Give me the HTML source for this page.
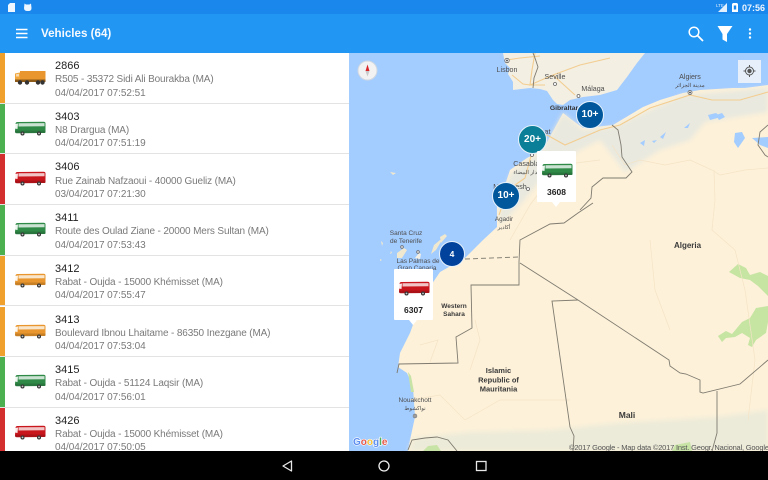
<!DOCTYPE html>
<html><head><meta charset="utf-8">
<style>
*{box-sizing:border-box}
html,body{margin:0;padding:0;width:768px;height:480px;overflow:hidden;background:#000;font-family:"Liberation Sans","Noto Sans CJK SC",sans-serif}
.abs{position:absolute}
#status{left:0;top:0;width:768px;height:14px;background:#1a87ec}
#bar{left:0;top:14px;width:768px;height:39px;background:#2196f3}
#title{left:41px;top:26px;color:#fff;font-size:11.6px;font-weight:bold;line-height:16px;opacity:.96}
#list{left:0;top:53px;width:349px;height:398px;background:#fff;overflow:hidden}
.row{position:absolute;left:0;width:349px;height:50.7px;border-bottom:1px solid #e3e3e3}
.c{position:absolute;left:0;top:0;width:5px;height:100%}
.n{position:absolute;left:55px;top:6px;font-size:11px;line-height:14px;color:#222}
.a{position:absolute;left:55px;top:20.200px;font-size:10px;letter-spacing:-.14px;line-height:14px;color:#7a7a7a;white-space:nowrap}
.d{position:absolute;left:55px;top:33.500px;font-size:10px;letter-spacing:-.06px;line-height:14px;color:#7a7a7a;white-space:nowrap}
.ic{position:absolute;left:14px;top:16px;width:32px;height:18px}
#nav{left:0;top:451px;width:768px;height:29px;background:#000}
.clu{position:absolute;border-radius:50%;border:1.5px solid #e8f2fb;color:#fff;font-weight:bold;text-align:center}
.card{position:absolute;background:#fff;width:39px;height:51px;border-radius:1px}
.card:after{content:"";position:absolute;left:15px;bottom:-5px;border-left:4px solid transparent;border-right:4px solid transparent;border-top:5px solid #fff}
.card b{position:absolute;left:0;width:100%;top:34.500px;text-align:center;font-size:8.5px;color:#222;line-height:12px}
.card svg{position:absolute;left:4px;top:11px;width:32px;height:18px}
</style></head><body>

<svg width="0" height="0" style="position:absolute">
<defs>
<filter id="soft"><feGaussianBlur stdDeviation="2.500"/></filter>
<symbol id="bus" viewBox="0 0 32 18">
<path d="M1.500 4Q1.500 2 3.500 2L29.500 1.800Q31.500 1.800 31.500 3.500L31.500 12Q31.500 13 30 13L3 13.300Q1 13.300 1 11.500Z" fill="currentColor"/>
<path d="M4.500 3.300L30.500 3.100L30.500 6.300L4.500 6.500Z" fill="#fff" opacity=".75"/>
<path d="M1 4L4 3.500L3.500 9L.5 8.500Z" fill="#fff" opacity=".9"/>
<path d="M1 10.500H31.500V13L1 13.300Z" fill="#000" opacity=".14"/>
<circle cx="8.500" cy="13.500" r="2" fill="#333"/><circle cx="8.500" cy="13.500" r=".9" fill="#ccc"/>
<circle cx="25" cy="13.500" r="2" fill="#333"/><circle cx="25" cy="13.500" r=".9" fill="#ccc"/>
</symbol>
<symbol id="truck" viewBox="0 0 32 18">
<rect x="6" y="2" width="25.500" height="9" fill="#e8962d"/>
<path d="M1 4.500L6 3.500V11.500H1Z" fill="#f0a63a"/>
<path d="M2 5.300L5 4.800V7.500H2Z" fill="#fff" opacity=".6"/>
<rect x="1" y="10.500" width="30.500" height="2.500" fill="#8d5a17"/>
<circle cx="6" cy="13.500" r="2.200" fill="#333"/><circle cx="13" cy="13.500" r="2.200" fill="#333"/><circle cx="24" cy="13.500" r="2.200" fill="#333"/><circle cx="28.500" cy="13.500" r="2.200" fill="#333"/>
</symbol>
</defs>
</svg>

<!-- MAP -->
<svg class="abs" style="left:349px;top:53px" width="419" height="398" viewBox="349 53 419 398">
<rect x="349" y="53" width="419" height="398" fill="#a3ccff"/>
<!-- Iberia -->
<path d="M503 53L505 63L510 68L508 74L513 82L513 90L530 88L540 89L547 91L553 100L557 104L563 105L570 100L583 97L600 95L617 90L627 77L637 63L645 53Z" fill="#f3efe3"/>
<!-- Africa -->
<path d="M563 113L552 133L543 150L527 158L510 170L505 185L497 197L497 227L483 240L465 258L440 272L423 297L410 333L400 353L398 367L407 373L413 387L415 417L410 440L408 451L768 451L768 85L745 88L733 88L700 90L683 93L660 100L643 107L628 116L613 125L595 127L583 128L572 120Z" fill="#fdf1d9"/>
<!-- Grey northern belt -->
<path d="M563 113L543 150L512 172L500 200L500 225L520 205L545 175L580 150L600 140L625 172L660 150L690 140L705 122L768 112L768 88L683 95L613 127L583 130Z" fill="#e9e9df" filter="url(#soft)"/>
<!-- Bottom sahel -->
<path d="M408 451L414 438L470 432L550 430L617 423L717 417L768 410L768 451Z" fill="#ecebd9" filter="url(#soft)"/>
<!-- Green patches -->
<path d="M729 272L738 264L746 268L750 275L760 272L768 276L768 296L758 286L750 280L740 278Z M718 336L726 331L732 334L742 322L750 318L756 308L768 306L768 322L766 333L756 340L752 347L748 345L750 338L742 333L735 337L726 338L722 342Z" fill="#c6e4a2"/>
<path d="M408 372L411 376L414 392L411 392Z M423 451L428 446L437 445L441 451Z M672 451L675 445L690 442L692 451Z" fill="#c8e3a6"/>
<!-- Islands -->
<path d="M381 241L383 243L382 246Z M391 251L392 253L390 254Z M380 259L382 260L380 261Z M397 253L404 248L407 250L402 258L397 258Z M440 237L445 234L447 236L441 243Z M434 245L440 240L442 240L436 250L431 254Z M390 172L396 173L393 175Z" fill="#f0e8cf"/>
<path d="M415 258L419 253L421 254L420 259Z" fill="#f3efe3"/>
<!-- Lakes -->
<path d="M640 143L645 140L644 146Z M652 141L657 140L654 143Z M660 137L666 132L663 139Z M684 128L690 123L688 128Z M716 115L722 113L725 117L719 120Z M735 133L742 132L745 138L738 148L734 142Z M752 138L768 137L768 148L760 145Z" fill="#a3ccff"/>
<path d="M708 115L716 113L721 117L710 120Z" fill="#a3ccff"/>
<!-- Roads -->
<g fill="none" stroke="#f3cd90" stroke-width="1.100">
<path d="M507 60L520 58L540 56M512 75L523 84L530 85L545 85M535 53L532 70L530 85L553 75L580 65L610 58M553 75L575 95"/>
<path d="M532 152L547 135L565 145L600 130L620 125L650 108L690 95L712 100L740 100L768 92"/>
<path d="M532 152L525 178L508 190L499 215"/>
</g>
<g fill="none" stroke="#f4e3c6" stroke-width=".7">
<path d="M612 145L625 165L640 160L665 165L690 160M690 160L712 170L720 175L745 170L768 168M714 170L715 200L712 230L735 250M600 160L560 165L530 205M530 205L510 240M650 240L655 290L670 330M735 250L745 290L755 360L748 420M420 345L438 340L430 362M410 400L440 395L465 420L500 400L570 400M475 320L480 340L470 370"/>
</g>
<!-- Borders -->
<g fill="none" stroke="#7f7b70" stroke-width=".9">
<path d="M612 125L618 130L621 145L622 157L632 172L626 178L603 178L592 187L591 198L580 210"/>
<path d="M593 203L578 213L564 223L550 224L520 240L519 262V285H471L472 328L456 337L458 363L399 364L397 373"/>
<path d="M520 263L578 300L669 360L670 366L680 373L686 374L700 380L700 392L703 393L740 384L768 360"/>
<path d="M578 300L552 301L570 427L574 436L573 451"/>
<path d="M717 391L717 433L712 451"/>
<path d="M768 125L760 132L758 145L765 155L768 157"/>
<path d="M408 450L412 440L425 438L437 437L448 440L457 451"/>
<path d="M533 53L535 58L538 67L534 78L533 88"/>
</g>
<path d="M465 259L519 257" stroke="#8a857a" stroke-width="1" stroke-dasharray="5 3" fill="none"/>
<!-- City markers -->
<g fill="#fff" stroke="#666" stroke-width=".8">
<circle cx="507" cy="60.500" r="2.200"/><circle cx="555" cy="84" r="1.500"/><circle cx="578.500" cy="96" r="1.500"/><circle cx="690" cy="92.500" r="2"/><circle cx="532" cy="155" r="1.500"/><circle cx="528" cy="189" r="1.500"/><circle cx="415" cy="416" r="1.800"/><circle cx="418" cy="252" r="1.300"/><circle cx="402" cy="247" r="1.300"/>
</g>
<circle cx="507" cy="60.500" r="1" fill="#555"/><circle cx="690" cy="92.500" r="1" fill="#555"/><circle cx="415" cy="416" r=".9" fill="#555"/>
<!-- Labels -->
<g font-family="Liberation Sans,Noto Sans CJK SC,sans-serif" font-size="7.100" fill="#4d4d4d" text-anchor="middle">
<text x="507" y="72">Lisbon</text>
<text x="555" y="79">Seville</text>
<text x="593" y="91">Málaga</text>
<text x="690" y="79">Algiers</text>
<text x="690" y="87" font-size="5.500">مدينة الجزائر</text>
<text x="541" y="134">Rabat</text>
<text x="532" y="166">Casablanca</text>
<text x="527" y="174" font-size="5.500">الدار البيضاء</text>
<text x="510" y="189">Marrakesh</text>
<text x="504" y="221" font-size="6.300">Agadir</text>
<text x="504" y="229" font-size="5.500">أكادير</text>
<text x="406" y="235" font-size="6.500">Santa Cruz</text>
<text x="406" y="243" font-size="6.500">de Tenerife</text>
<text x="418" y="263" font-size="6.500">Las Palmas de</text>
<text x="417" y="270" font-size="6.500">Gran Canaria</text>
<text x="415" y="402" font-size="6.500">Nouakchott</text>
<text x="415" y="410" font-size="5.500">نواكشوط</text>
</g>
<g font-family="Liberation Sans,sans-serif" font-size="8" font-weight="bold" fill="#3a3a3a" text-anchor="middle">
<text x="564" y="110" font-size="6.800" fill="#333">Gibraltar</text>
<text x="687.500" y="248">Algeria</text>
<text x="454" y="308" font-size="6.500">Western</text>
<text x="454" y="316" font-size="6.500">Sahara</text>
<text x="498.500" y="373" font-size="7.500">Islamic</text>
<text x="498.500" y="382.500" font-size="7.500">Republic of</text>
<text x="498.500" y="391.500" font-size="7.500">Mauritania</text>
<text x="627" y="418" font-size="8.500">Mali</text>
</g>
<!-- Google -->
<g font-family="Liberation Sans,sans-serif" font-size="10" font-weight="bold" stroke="#fff" stroke-width="1.200" paint-order="stroke">
<text x="353" y="445"><tspan fill="#5b8def">G</tspan><tspan fill="#e4584a">o</tspan><tspan fill="#f2c03a">o</tspan><tspan fill="#5b8def">g</tspan><tspan fill="#4fb060">l</tspan><tspan fill="#e4584a">e</tspan></text>
</g>
<text x="569" y="450" font-family="Liberation Sans,sans-serif" font-size="7.500" fill="#555" textLength="200">©2017 Google - Map data ©2017 Inst. Geogr. Nacional, Google</text>
<!-- Compass -->
<circle cx="367.500" cy="70.500" r="9.500" fill="#f2f2f2" stroke="#cfd8e2" stroke-width="1"/>
<path d="M367.500 64.500L365.500 71H369.500Z" fill="#d9262a"/>
<path d="M367.500 76.500L365.500 71H369.500Z" fill="#c8c8c8"/>
<!-- Locate -->
<rect x="738" y="60" width="23" height="23" fill="#e6effa"/>
<circle cx="749.500" cy="71" r="4" fill="none" stroke="#555" stroke-width="1"/>
<circle cx="749.500" cy="71" r="2.200" fill="#555"/>
<path d="M749.500 65V67M749.500 75V77M743.500 71H745.500M753.500 71H755.500" stroke="#555" stroke-width="1"/>
</svg>

<!-- Clusters -->
<div class="clu" style="left:576px;top:101px;width:28px;height:28px;background:#01579b;font-size:10px;line-height:26px">10+</div>
<div class="clu" style="left:518px;top:125px;width:29px;height:29px;background:#0b7f98;font-size:10px;line-height:27px">20+</div>
<div class="clu" style="left:492px;top:182px;width:28px;height:28px;background:#01579b;font-size:10px;line-height:26px">10+</div>
<div class="clu" style="left:439px;top:241px;width:26px;height:26px;background:#01439c;font-size:8.500px;line-height:24px">4</div>

<!-- Cards -->
<div class="card" style="left:537px;top:151px">
<svg style="color:#2f8a47"><use href="#bus"/></svg><b>3608</b></div>
<div class="card" style="left:394px;top:269px">
<svg style="color:#c8161c"><use href="#bus"/></svg><b>6307</b></div>

<!-- LIST -->
<div class="abs" id="list">
<div class="row" style="top:0"><div class="c" style="background:#f0a02c"></div><svg class="ic" style="color:#e8962d"><use href="#truck"/></svg><div class="n">2866</div><div class="a">R505 - 35372 Sidi Ali Bourakba (MA)</div><div class="d">04/04/2017 07:52:51</div></div>
<div class="row" style="top:50.700px"><div class="c" style="background:#4caf50"></div><svg class="ic" style="color:#2f8a47"><use href="#bus"/></svg><div class="n">3403</div><div class="a">N8 Drargua (MA)</div><div class="d">04/04/2017 07:51:19</div></div>
<div class="row" style="top:101.400px"><div class="c" style="background:#d32f2f"></div><svg class="ic" style="color:#c8161c"><use href="#bus"/></svg><div class="n">3406</div><div class="a">Rue Zainab Nafzaoui - 40000 Gueliz (MA)</div><div class="d">03/04/2017 07:21:30</div></div>
<div class="row" style="top:152.100px"><div class="c" style="background:#4caf50"></div><svg class="ic" style="color:#2f8a47"><use href="#bus"/></svg><div class="n">3411</div><div class="a">Route des Oulad Ziane - 20000 Mers Sultan (MA)</div><div class="d">04/04/2017 07:53:43</div></div>
<div class="row" style="top:202.800px"><div class="c" style="background:#f0a02c"></div><svg class="ic" style="color:#e8962d"><use href="#bus"/></svg><div class="n">3412</div><div class="a">Rabat - Oujda - 15000 Khémisset (MA)</div><div class="d">04/04/2017 07:55:47</div></div>
<div class="row" style="top:253.500px"><div class="c" style="background:#f0a02c"></div><svg class="ic" style="color:#e8962d"><use href="#bus"/></svg><div class="n">3413</div><div class="a">Boulevard Ibnou Lhaitame - 86350 Inezgane (MA)</div><div class="d">04/04/2017 07:53:04</div></div>
<div class="row" style="top:304.200px"><div class="c" style="background:#4caf50"></div><svg class="ic" style="color:#2f8a47"><use href="#bus"/></svg><div class="n">3415</div><div class="a">Rabat - Oujda - 51124 Laqsir (MA)</div><div class="d">04/04/2017 07:56:01</div></div>
<div class="row" style="top:354.900px"><div class="c" style="background:#d32f2f"></div><svg class="ic" style="color:#c8161c"><use href="#bus"/></svg><div class="n">3426</div><div class="a">Rabat - Oujda - 15000 Khémisset (MA)</div><div class="d">04/04/2017 07:50:05</div></div>
</div>

<!-- STATUS -->
<div class="abs" id="status"></div>
<svg class="abs" style="left:0;top:0" width="768" height="14">
<path d="M10 3H15V12H8V5Z" fill="#eef6ff"/>
<path d="M24.500 3.500L26 4.500H29.500L31 3.500L31.500 8Q31.500 11 28.500 11H27.500Q24 11 24 8Z" fill="#eef6ff"/>
<path d="M727 3V12H718Z" fill="#eef6ff" opacity=".95"/>
<text x="716" y="7" font-family="Liberation Sans,sans-serif" font-size="4.500" fill="#dcecff">LTE</text>
<path d="M732 4L733 3H737L738 4V12H732Z" fill="#fff"/>
<rect x="733.800" y="5.500" width="2.400" height="4" fill="#1a87ec"/>
<text x="742" y="11" font-family="Liberation Sans,sans-serif" font-size="9" font-weight="bold" fill="#eef6ff">07:56</text>
</svg>

<!-- APP BAR -->
<div class="abs" id="bar"></div>
<div class="abs" id="title">Vehicles (64)</div>
<svg class="abs" style="left:0;top:14px" width="768" height="39">
<path d="M16 15.500H27.500M16 19.500H27.500M16 23.500H27.500" stroke="#fff" stroke-width="1.600"/>
<circle cx="694" cy="18" r="4.800" fill="none" stroke="#fff" stroke-width="1.500"/>
<path d="M697.500 21.500L703 27" stroke="#fff" stroke-width="1.800"/>
<path d="M717.500 12H732.500L727 20V28L722.500 25.500V20Z" fill="#fff"/>
<circle cx="750" cy="15.500" r="1.200" fill="#fff"/><circle cx="750" cy="19.500" r="1.200" fill="#fff"/><circle cx="750" cy="23.500" r="1.200" fill="#fff"/>
</svg>

<!-- NAV -->
<div class="abs" id="nav"></div>
<svg class="abs" style="left:0;top:451px" width="768" height="29">
<path d="M291.500 10V20L283 15Z" fill="none" stroke="#e8e8e8" stroke-width="1.300" stroke-linejoin="round"/>
<circle cx="384" cy="15" r="5" fill="none" stroke="#f0f0f0" stroke-width="1.300"/>
<rect x="476.500" y="10.500" width="9.500" height="9" fill="none" stroke="#e8e8e8" stroke-width="1.300"/>
</svg>
</body></html>
